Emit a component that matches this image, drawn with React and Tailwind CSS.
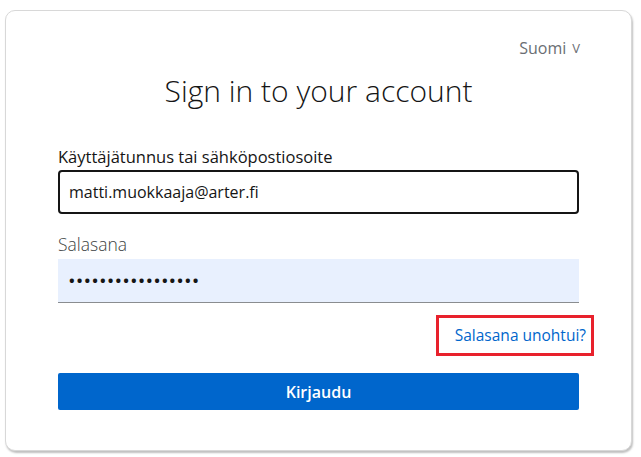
import React, { useState } from 'react';

const App = () => {
  const [username, setUsername] = useState('matti.muokkaaja@arter.fi');
  const [password] = useState('•••••••••••••••••');

  return (
    <div className="min-h-screen bg-white pt-[10px] px-[5px]" style={{ fontFamily: '"Open Sans", "Liberation Sans", sans-serif' }}>
      <div className="w-[627px] h-[441px] bg-white rounded-[10px] border border-[#d8d8d8] shadow-[1px_2px_2px_rgba(0,0,0,0.25)] px-[52px] pt-[25px]">
        <div className="flex justify-end">
          <button className="text-[16px] text-[#6a6e73] flex items-center gap-[6px] mr-[-1px]">
            Suomi <span className="text-[13px] leading-none">V</span>
          </button>
        </div>

        <h1 className="text-center text-[30px] font-light text-[#151515] mt-[11px] leading-[40px]">
          Sign in to your account
        </h1>

        <form className="mt-[35px]" onSubmit={(e) => e.preventDefault()}>
          <div>
            <label className="block text-[16.5px] text-[#151515] mb-[2px] leading-[22px]">Käyttäjätunnus tai sähköpostiosoite</label>
            <input
              type="text"
              value={username}
              onChange={(e) => setUsername(e.target.value)}
              className="w-full h-[44px] border-2 border-[#151515] rounded-[4px] px-[9px] text-[16px] text-[#151515] outline-none"
            />
          </div>

          <div className="mt-[18px]">
            <label className="block text-[17.5px] font-light text-[#3c3f42] mb-[3px] leading-[24px]">Salasana</label>
            <div className="w-full h-[44px] bg-[#e8f0fe] border-b border-[#8a8d90] px-[11px] flex items-center text-[15px] font-bold tracking-[2.1px] text-[#151515]">
              {password}
            </div>
          </div>

          <div className="flex justify-end mt-[12px] -mr-[15px]">
            <a href="#" className="border-[3px] border-[#e8212c] pl-[16px] pr-[5px] py-[8px] text-[15.5px] text-[#0066cc] leading-[19px]">
              Salasana unohtui?
            </a>
          </div>

          <button
            type="submit"
            className="mt-[17px] w-full h-[37px] bg-[#0066cc] text-white text-[16px] font-semibold rounded-[2px]"
          >
            Kirjaudu
          </button>
        </form>
      </div>
    </div>
  );
};

export default App;
